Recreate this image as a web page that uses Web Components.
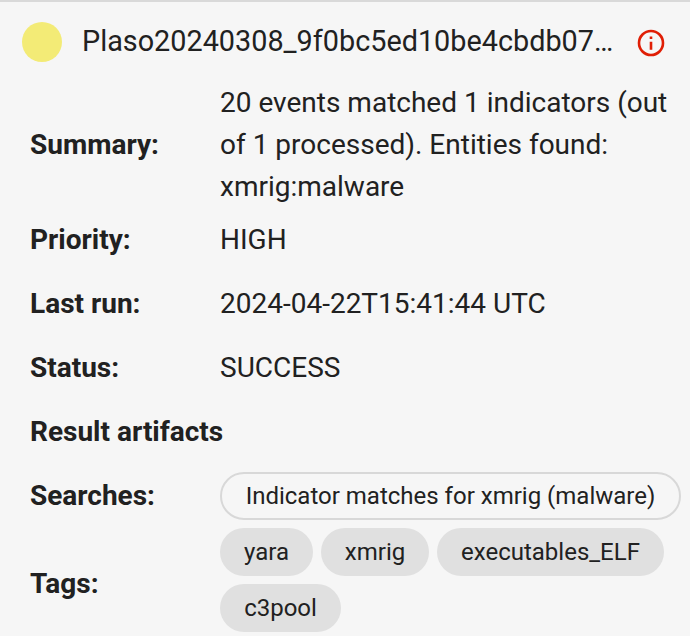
<!DOCTYPE html>
<html lang="en"><head><meta charset="utf-8"><title>Analyzer result</title>
<style>body{margin:0;background:#f6f6f6;color:#212121;font-family:Roboto,"Liberation Sans",sans-serif}</style></head><body>
<result-card name="Plaso20240308_9f0bc5ed10be4cbdb07…">
<result-row label="Summary:" style="--h:126px;--lh:42px">20 events matched 1 indicators (out<br>of 1 processed). Entities found:<br>xmrig:malware</result-row>
<result-row label="Priority:">HIGH</result-row>
<result-row label="Last run:">2024-04-22T15:41:44 UTC</result-row>
<result-row label="Status:">SUCCESS</result-row>
<result-row label="Result artifacts"></result-row>
<result-row label="Searches:" style="--h:64px"><result-chip outlined>Indicator matches for xmrig (malware)</result-chip></result-row>
<result-row label="Tags:" style="--h:112px"><chip-group><result-chip style="--w:93px">yara</result-chip><result-chip style="--w:108px">xmrig</result-chip><result-chip style="--w:227px">executables_ELF</result-chip><result-chip style="--w:121px">c3pool</result-chip></chip-group></result-row>
</result-card>
<script>
const define=(tag,html,setup)=>customElements.define(tag,class extends HTMLElement{
 constructor(){super();this.attachShadow({mode:'open'}).innerHTML=html;}
 connectedCallback(){if(setup)setup(this,this.shadowRoot);}
});
define('result-chip',`<style>:host{box-sizing:border-box;display:flex;align-items:center;justify-content:center;width:var(--w);height:48px;border-radius:24px;background:#e0e0e0;font-size:24px;line-height:40px;white-space:nowrap}:host([outlined]){width:461px;background:transparent;border:2px solid #d8d8d8}</style><slot></slot>`);
define('chip-group',`<style>:host{display:flex;flex-wrap:wrap;gap:8px;width:462px;padding-bottom:8px}</style><slot></slot>`);
define('info-icon',`<style>:host{display:block;width:28px;height:28px}svg{display:block}</style><svg width="28" height="28" viewBox="0 0 28 28"><circle cx="14" cy="14" r="12" fill="none" stroke="#e01e05" stroke-width="2.6"/><path d="M12.7 7.4h2.6V10h-2.6zM12.7 12.7h2.6v8h-2.6z" fill="#e01e05"/></svg>`);
define('result-row',`<style>:host{display:grid;grid-template-columns:190px 1fr;align-items:center;height:var(--h,64px);padding-left:30px;font-size:28px;line-height:var(--lh,42px);white-space:nowrap}b{font-weight:700}</style><b></b><div><slot></slot></div>`,(e,r)=>r.querySelector('b').textContent=e.getAttribute('label'));
define('result-card',`<style>:host{display:block;box-sizing:border-box;height:636px;overflow:hidden;border-top:2px solid #d9d9d9}header{display:grid;grid-template-columns:60px 555px 28px;align-items:center;height:80px;padding-left:22px;font-size:28.8px;white-space:nowrap}i{width:40px;height:40px;border-radius:50%;background:#f3eb76}span{padding-bottom:2px}info-icon{justify-self:start;margin-top:2px}</style><header><i></i><span></span><info-icon></info-icon></header><slot></slot>`,(e,r)=>r.querySelector('span').textContent=e.getAttribute('name'));
</script></body></html>
